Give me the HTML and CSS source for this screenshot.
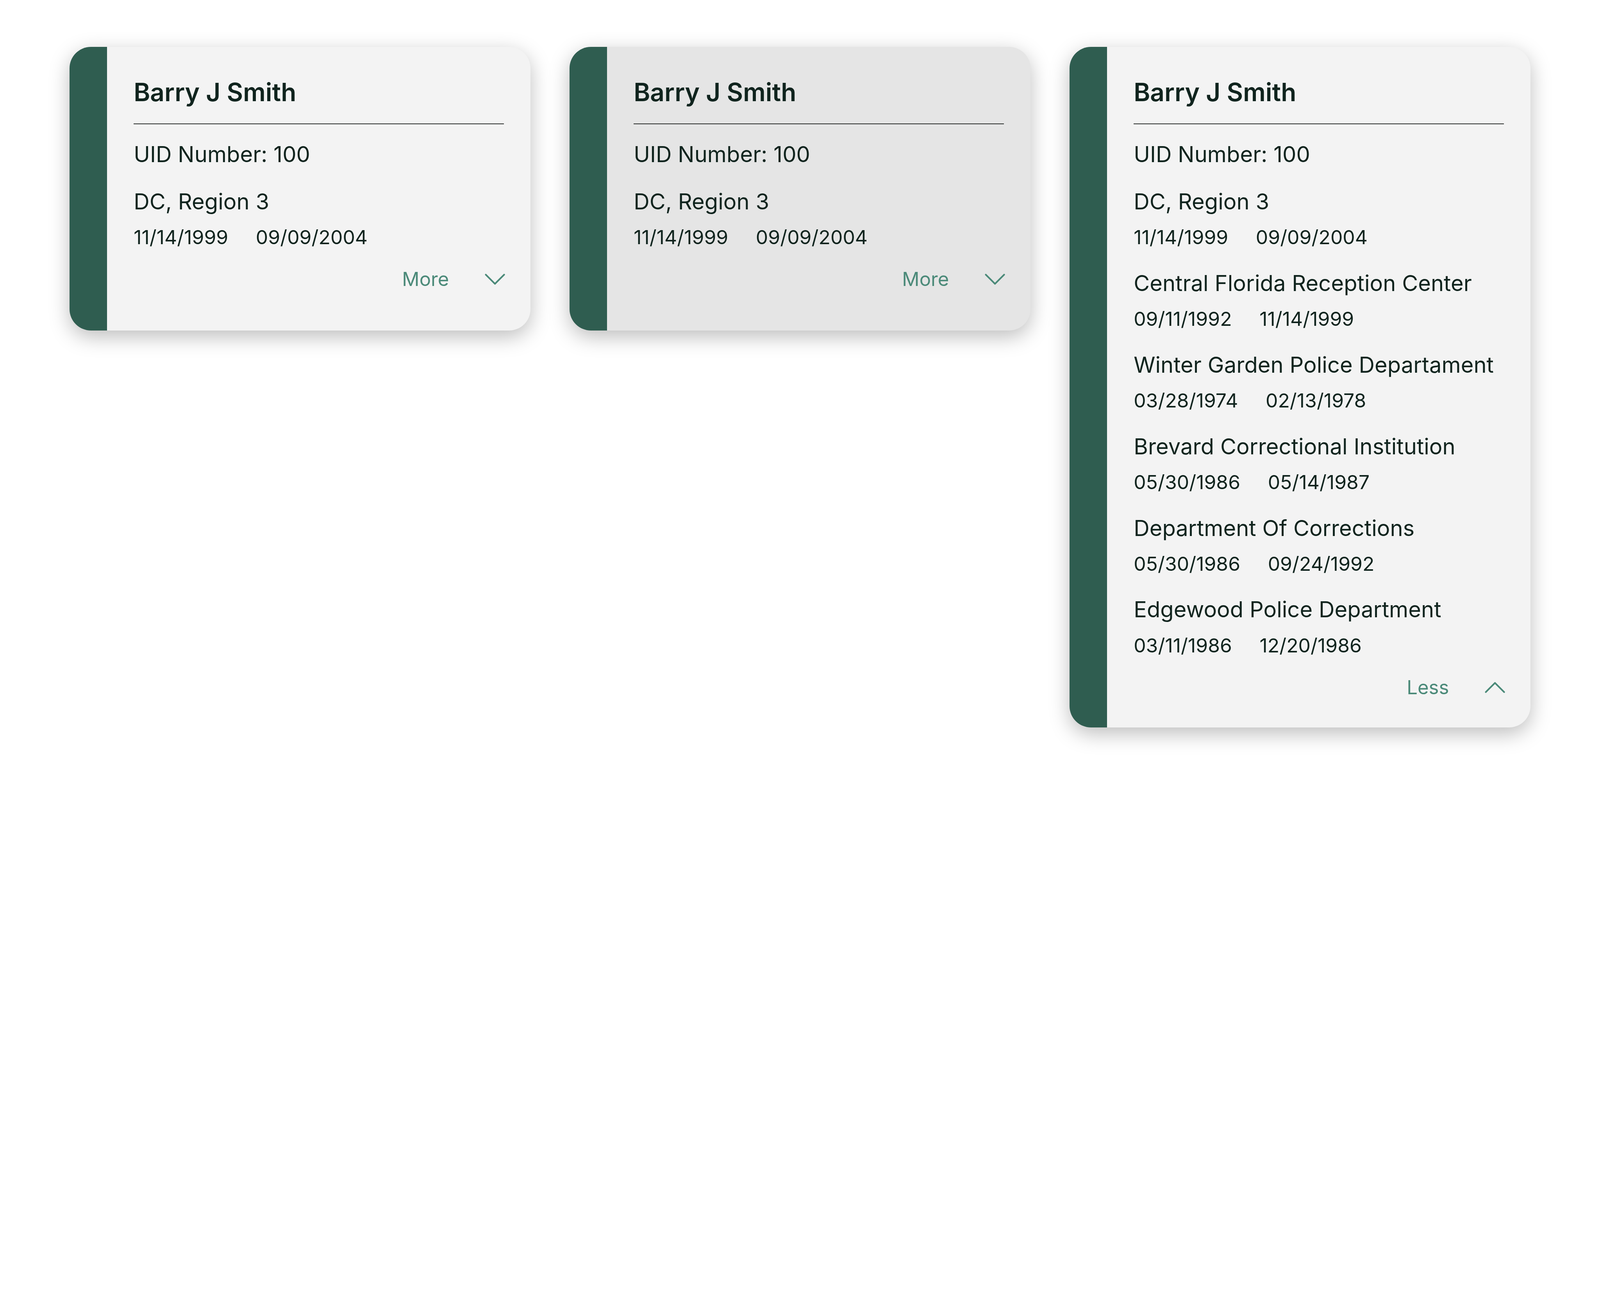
FILE: index.html
```html
<!DOCTYPE html>
<html lang="en">
<head>
  <meta charset="UTF-8">
  <title>Employment History Cards</title>
  <link rel="stylesheet" href="styles.css">
</head>
<body>
  <div class="board" id="board">

    <article class="card">
      <div class="card-bar"></div>
      <div class="card-body">
        <h2 class="card-name">Barry J Smith</h2>
        <p class="card-uid">UID Number: 100</p>
        <div class="entry">
          <p class="entry-title">DC, Region 3</p>
          <p class="entry-dates"><span>11/14/1999</span><span>09/09/2004</span></p>
        </div>
        <button class="toggle">
          More
          <svg width="20" height="12" viewBox="0 0 20 12"><path d="M1 1.5 L10 10.5 L19 1.5"/></svg>
        </button>
      </div>
    </article>

    <!-- hover state -->
    <article class="card card-hover">
      <div class="card-bar"></div>
      <div class="card-body">
        <h2 class="card-name">Barry J Smith</h2>
        <p class="card-uid">UID Number: 100</p>
        <div class="entry">
          <p class="entry-title">DC, Region 3</p>
          <p class="entry-dates"><span>11/14/1999</span><span>09/09/2004</span></p>
        </div>
        <button class="toggle">
          More
          <svg width="20" height="12" viewBox="0 0 20 12"><path d="M1 1.5 L10 10.5 L19 1.5"/></svg>
        </button>
      </div>
    </article>

    <!-- expanded state -->
    <article class="card card-open">
      <div class="card-bar"></div>
      <div class="card-body">
        <h2 class="card-name">Barry J Smith</h2>
        <p class="card-uid">UID Number: 100</p>
        <div class="entry">
          <p class="entry-title">DC, Region 3</p>
          <p class="entry-dates"><span>11/14/1999</span><span>09/09/2004</span></p>
        </div>
        <div class="entry">
          <p class="entry-title">Central Florida Reception Center</p>
          <p class="entry-dates"><span>09/11/1992</span><span>11/14/1999</span></p>
        </div>
        <div class="entry">
          <p class="entry-title">Winter Garden Police Departament</p>
          <p class="entry-dates"><span>03/28/1974</span><span>02/13/1978</span></p>
        </div>
        <div class="entry">
          <p class="entry-title">Brevard Correctional Institution</p>
          <p class="entry-dates"><span>05/30/1986</span><span>05/14/1987</span></p>
        </div>
        <div class="entry">
          <p class="entry-title">Department Of Corrections</p>
          <p class="entry-dates"><span>05/30/1986</span><span>09/24/1992</span></p>
        </div>
        <div class="entry">
          <p class="entry-title">Edgewood Police Department</p>
          <p class="entry-dates"><span>03/11/1986</span><span>12/20/1986</span></p>
        </div>
        <button class="toggle">
          Less
          <svg width="20" height="12" viewBox="0 0 20 12"><path d="M1 10.5 L10 1.5 L19 10.5"/></svg>
        </button>
      </div>
    </article>

  </div>

  <script>
    // the layout is drawn for a 1568px wide window, scale it to the real one
    const board = document.getElementById('board');
    function fit() {
      board.style.zoom = window.innerWidth / 1568;
    }
    fit();
    window.addEventListener('resize', fit);
  </script>
</body>
</html>
```

FILE: styles.css
```css
body {
  margin: 0;
  background-color: #ffffff;
  font-family: Inter, "Noto Sans", sans-serif;
  color: #10241e;
}

.board {
  display: flex;
  align-items: flex-start;
  gap: 38px;
  padding: 46px 68px;
}

.card {
  display: flex;
  flex-shrink: 0;
  width: 452px;
  min-height: 278px;
  background-color: #f3f3f3;
  border-radius: 21px;
  overflow: hidden;
  box-shadow: 0 6px 20px rgba(0, 0, 0, 0.26);
}

.card-hover {
  background-color: #e5e5e5;
}

.card-bar {
  flex: 0 0 37px;
  background-color: #2f5d50;
}

.card-body {
  flex: 1;
  display: flex;
  flex-direction: column;
  padding: 30px 26px 28px 26px;
}

.card-name {
  margin: 0;
  font-size: 24.5px;
  font-weight: 600;
  line-height: 28px;
  padding-bottom: 17px;
  border-bottom: 1px solid #2b2f2d;
}

.card-uid {
  margin: 17px 0 0;
  font-size: 21.5px;
  line-height: 26px;
}

.entry {
  margin-top: 20px;
}

.entry + .entry {
  margin-top: 21px;
}

.entry-title {
  margin: 0;
  font-size: 21.5px;
  line-height: 26px;
  white-space: nowrap;
}

.entry-dates {
  display: flex;
  gap: 27px;
  margin: 11px 0 0;
  font-size: 19.1px;
  line-height: 22px;
}

.toggle {
  align-self: flex-end;
  display: flex;
  align-items: center;
  gap: 35px;
  margin-top: 19px;
  margin-right: -1px;
  padding: 0;
  border: none;
  background: none;
  font-family: inherit;
  font-size: 18.8px;
  line-height: 22px;
  color: #4b8a79;
  cursor: pointer;
}

.toggle svg {
  fill: none;
  stroke: #4b8a79;
  stroke-width: 1.6;
  stroke-linecap: round;
  stroke-linejoin: round;
}
```
